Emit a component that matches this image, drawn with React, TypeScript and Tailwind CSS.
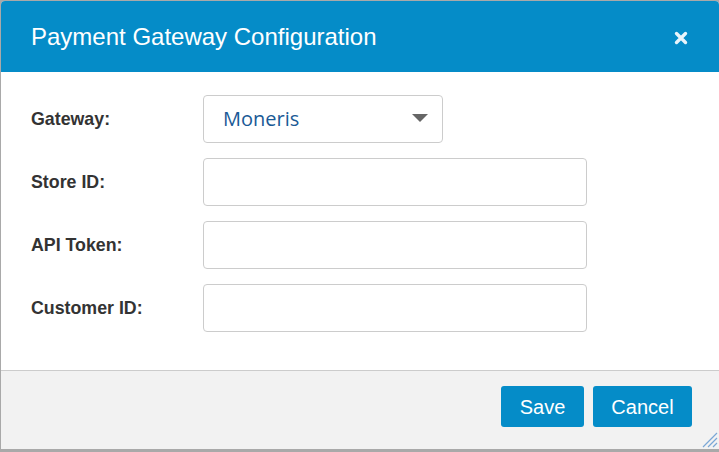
import React from 'react';

function Field({ label, children }: { label: string; children: React.ReactNode }) {
  return (
    <div className="flex items-center h-[48px]">
      <label className="w-[172px] text-[17.8px] font-bold text-[#333]">{label}</label>
      {children}
    </div>
  );
}

function TextBox() {
  return <input className="w-[384px] h-[48px] border border-[#ccc] rounded-[4px] bg-white outline-none px-3" />;
}

export default function App() {
  return (
    <div className="w-[719px] h-[452px] bg-[#a9a9a9] pl-px pt-px pb-[3px] font-['Liberation_Sans',Arial,sans-serif]">
      <div className="h-full flex flex-col bg-white rounded-t-[4px] overflow-hidden">
        <div className="h-[71px] shrink-0 bg-[#058cc8] flex items-center justify-between pl-[30px] pr-[31px]">
          <h1 className="text-[24px] text-white">Payment Gateway Configuration</h1>
          <svg width="14" height="14" viewBox="0 0 14 14" className="mt-[2px]">
            <path d="M2.5 2.5 L11.5 11.5 M11.5 2.5 L2.5 11.5" stroke="#e8f4fb" strokeWidth="3.4" strokeLinecap="round" />
          </svg>
        </div>
        <div className="flex-1 flex flex-col gap-[15px] pl-[30px] pt-[23px]">
          <Field label="Gateway:">
            <div className="w-[240px] h-[48px] border border-[#ccc] rounded-[4px] flex items-center justify-between pl-[19px] pr-[14px]">
              <span className="text-[20px] text-[#1a5a96] font-['Open_Sans',sans-serif]">Moneris</span>
              <svg width="16" height="8" viewBox="0 0 16 8" className="mb-[2px]">
                <path d="M0 0 H16 L8 8 Z" fill="#666" />
              </svg>
            </div>
          </Field>
          <Field label="Store ID:"><TextBox /></Field>
          <Field label="API Token:"><TextBox /></Field>
          <Field label="Customer ID:"><TextBox /></Field>
        </div>
        <div className="relative h-[79px] shrink-0 bg-[#f2f2f2] border-t border-[#ccc] flex items-start justify-end gap-[9px] pr-[27px] pt-[15px]">
          <button className="w-[83px] h-[41px] rounded-[3px] bg-[#058cc8] text-white text-[20px]">Save</button>
          <button className="w-[99px] h-[41px] rounded-[3px] bg-[#058cc8] text-white text-[20px]">Cancel</button>
          <svg width="18" height="18" viewBox="0 0 18 18" className="absolute right-[1px] bottom-[1px]">
            <path d="M17 3 L3 17 M17 8 L8 17 M17 13 L13 17" stroke="#7aa7d6" strokeWidth="1.2" />
          </svg>
        </div>
      </div>
    </div>
  );
}
